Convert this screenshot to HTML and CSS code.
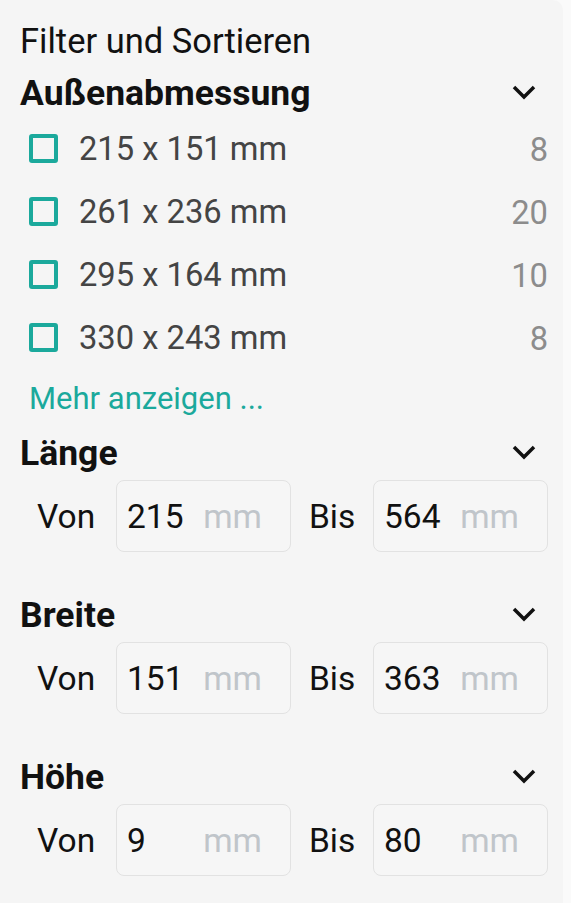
FILE: index.html
```html
<!DOCTYPE html>
<html lang="de">
<head>
    <meta charset="UTF-8">
    <meta name="viewport" content="width=device-width, initial-scale=1.0">
    <title>Filter und Sortieren</title>
    <link rel="stylesheet" href="styles.css">
</head>
<body>

<div class="panel">
    <h2 class="title">Filter und Sortieren</h2>

    <div class="section">
        <div class="section-head">
            <span>Außenabmessung</span>
            <svg class="chevron" viewBox="0 0 24 16"><path d="M2 2 L12 12 L22 2"/></svg>
        </div>
        <label class="option">
            <span class="box"></span>
            <span class="option-label">215 x 151 mm</span>
            <span class="count">8</span>
        </label>
        <label class="option">
            <span class="box"></span>
            <span class="option-label">261 x 236 mm</span>
            <span class="count">20</span>
        </label>
        <label class="option">
            <span class="box"></span>
            <span class="option-label">295 x 164 mm</span>
            <span class="count">10</span>
        </label>
        <label class="option">
            <span class="box"></span>
            <span class="option-label">330 x 243 mm</span>
            <span class="count">8</span>
        </label>
        <a class="more" href="#">Mehr anzeigen ...</a>
    </div>

    <div class="section">
        <div class="section-head">
            <span>Länge</span>
            <svg class="chevron" viewBox="0 0 24 16"><path d="M2 2 L12 12 L22 2"/></svg>
        </div>
        <div class="range">
            <span class="range-label">Von</span>
            <div class="field"><span class="value">215</span><span class="unit">mm</span></div>
            <span class="range-label bis">Bis</span>
            <div class="field"><span class="value">564</span><span class="unit">mm</span></div>
        </div>
    </div>

    <div class="section">
        <div class="section-head">
            <span>Breite</span>
            <svg class="chevron" viewBox="0 0 24 16"><path d="M2 2 L12 12 L22 2"/></svg>
        </div>
        <div class="range">
            <span class="range-label">Von</span>
            <div class="field"><span class="value">151</span><span class="unit">mm</span></div>
            <span class="range-label bis">Bis</span>
            <div class="field"><span class="value">363</span><span class="unit">mm</span></div>
        </div>
    </div>

    <div class="section">
        <div class="section-head">
            <span>Höhe</span>
            <svg class="chevron" viewBox="0 0 24 16"><path d="M2 2 L12 12 L22 2"/></svg>
        </div>
        <div class="range">
            <span class="range-label">Von</span>
            <div class="field"><span class="value">9</span><span class="unit">mm</span></div>
            <span class="range-label bis">Bis</span>
            <div class="field"><span class="value">80</span><span class="unit">mm</span></div>
        </div>
    </div>
</div>

</body>
</html>
```

FILE: styles.css
```css
* {
    box-sizing: border-box;
    margin: 0;
    padding: 0;
}

body {
    font-family: Roboto, 'Noto Sans', sans-serif;
    background-color: #fafafa;
    color: #111;
}

.panel {
    width: 563px;
    min-height: 903px;
    background-color: #f5f5f5;
    border-radius: 0 10px 0 0;
    padding: 13px 15px 0 20px;
}

.title {
    font-size: 34.5px;
    font-weight: 400;
    line-height: 56px;
    color: #111;
}

.section-head {
    display: flex;
    align-items: center;
    justify-content: space-between;
    height: 48px;
    font-size: 35.5px;
    font-weight: 700;
    color: #111;
}

.chevron {
    width: 24px;
    height: 16px;
    margin-right: 12px;
    fill: none;
    stroke: #111;
    stroke-width: 3.5;
}

.option {
    display: flex;
    align-items: center;
    height: 63px;
    padding-left: 9px;
    font-size: 32.7px;
}

.box {
    width: 29px;
    height: 29px;
    border: 4px solid #1ba99c;
    border-radius: 3px;
    margin-right: 21px;
    flex-shrink: 0;
}

.option-label {
    flex: 1;
    color: #444;
}

.count {
    color: #8c8c8c;
    padding-top: 3px;
}

.more {
    display: block;
    padding-left: 9px;
    line-height: 60px;
    font-size: 31px;
    color: #1ba99c;
    text-decoration: none;
}

.range {
    display: flex;
    align-items: center;
    margin-top: 3px;
    margin-bottom: 39px;
    padding-left: 17px;
    font-size: 33.5px;
}

.range-label {
    width: 79px;
}

.range-label.bis {
    width: 64px;
    margin-left: 18px;
}

.field {
    display: flex;
    align-items: center;
    width: 175px;
    height: 72px;
    padding: 0 28px 0 10px;
    border: 1.5px solid #e2e2e2;
    border-radius: 8px;
    background-color: #f6f6f6;
}

.value {
    flex: 1;
    color: #111;
}

.unit {
    color: #c0c5ca;
}
```
